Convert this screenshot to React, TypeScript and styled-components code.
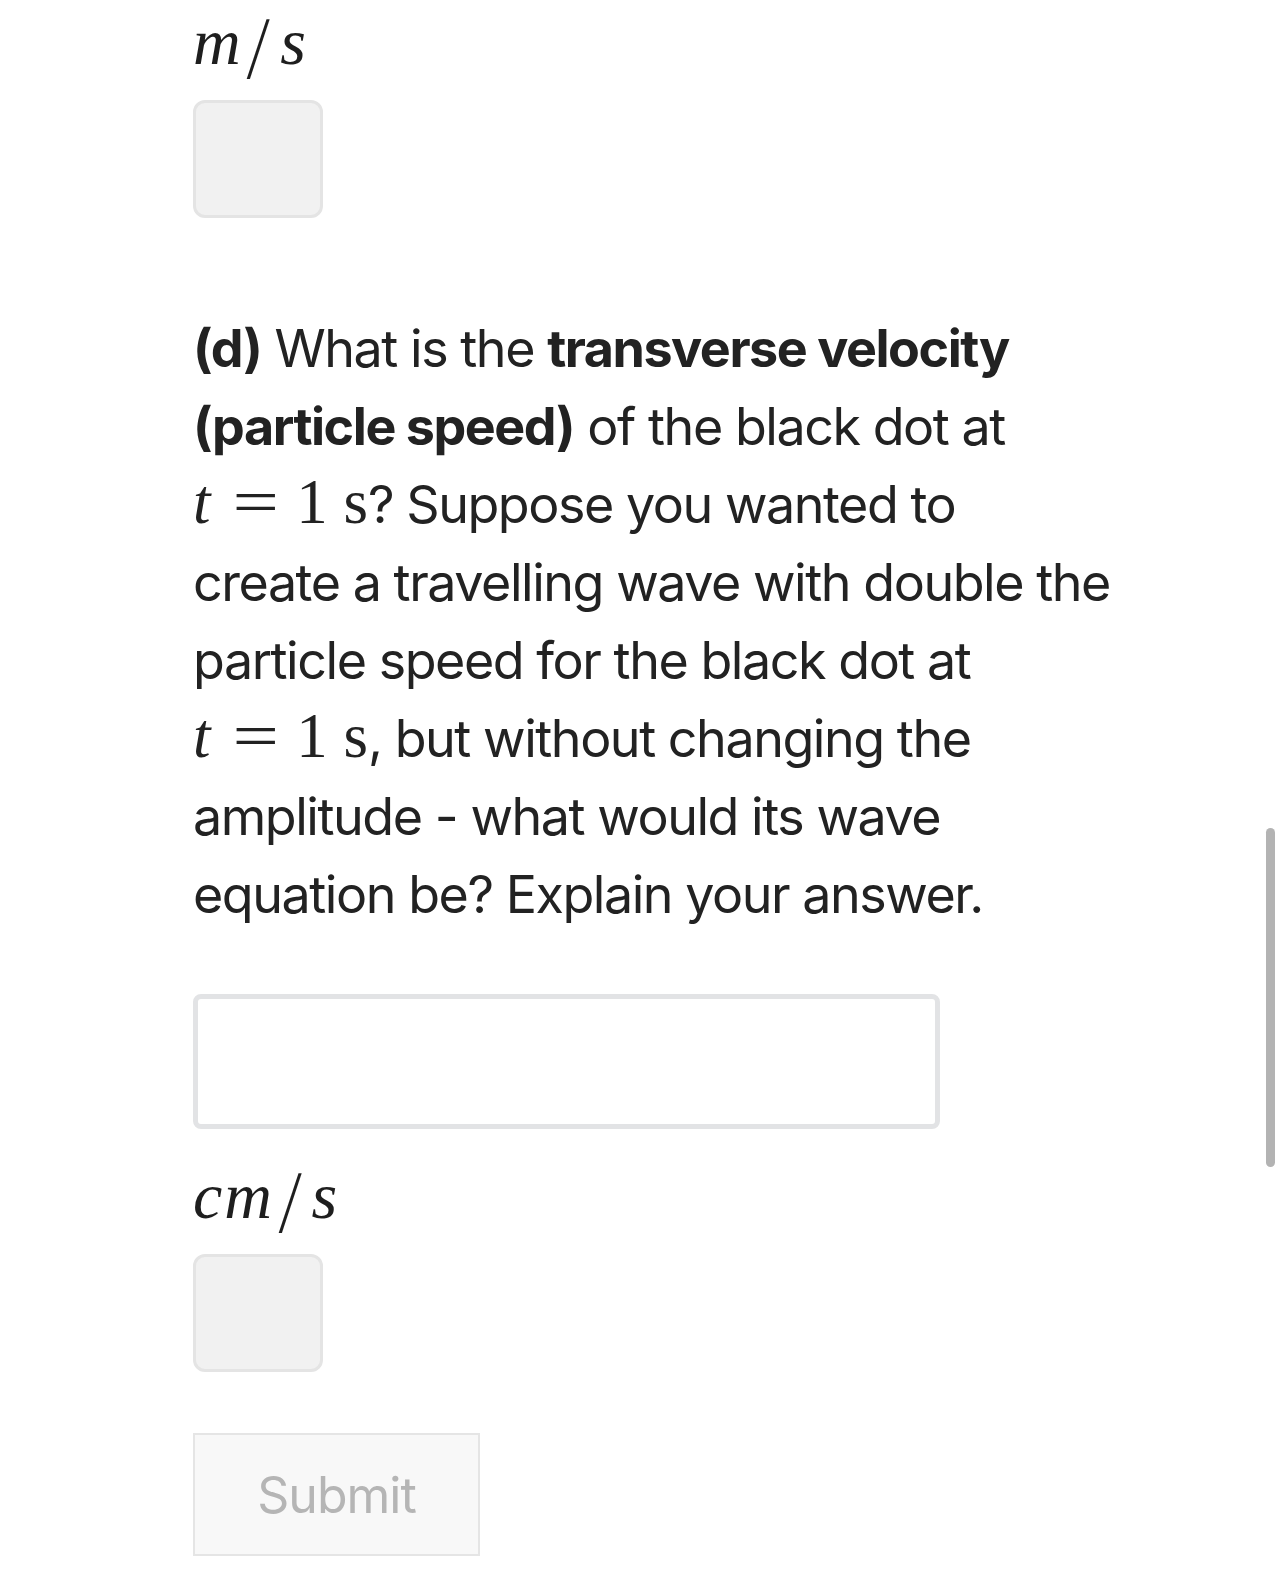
import React from 'react';
import styled, { createGlobalStyle } from 'styled-components';

const GlobalStyle = createGlobalStyle`
  html, body {
    margin: 0;
    padding: 0;
    background: #ffffff;
    overflow: hidden;
  }
  body {
    font-family: Inter, "Liberation Sans", sans-serif;
    color: #222222;
    -webkit-font-smoothing: antialiased;
  }
`;

const Page = styled.main`
  position: relative;
  min-height: 1591px;
  padding: 2px 0 0 193px;
  box-sizing: border-box;
`;

const Unit = styled.div<{ $gap?: number }>`
  margin-top: ${(p) => p.$gap ?? 0}px;
  height: 80px;
  font-family: "Liberation Serif", serif;
  font-size: 66px;
  line-height: 80px;
  letter-spacing: 0.03em;
  color: #1e1e1e;
`;

const Var = styled.i`
  font-style: italic;
`;

const Slash = styled.span`
  display: inline-block;
  margin: 0 0.16em 0 0.1em;
  transform: translateY(0.1em) scaleY(1.35) skewX(-6deg);
`;

const UnitBox = styled.div`
  margin-top: 18px;
  width: 130px;
  height: 118px;
  box-sizing: border-box;
  border: 3px solid #e4e4e4;
  border-radius: 12px;
  background: #f1f1f1;
`;

const Question = styled.p`
  margin: 92px 0 0;
  width: 918px;
  font-size: 52px;
  line-height: 78px;
  font-weight: 400;
  letter-spacing: -0.028em;
`;

const Strong = styled.strong`
  font-weight: 700;
`;

const Math = styled.span`
  font-family: "Liberation Serif", serif;
  font-size: 1.21em;
  line-height: 1;
  letter-spacing: 0;
  white-space: nowrap;
`;

const Rel = styled.span`
  display: inline-block;
  margin: 0 0.36em 0 0.44em;
  transform: scaleX(1.31);
`;

const AnswerInput = styled.input`
  display: block;
  margin: 60px 0 0;
  width: 747px;
  height: 135px;
  box-sizing: border-box;
  border: 5px solid #e2e3e5;
  border-radius: 8px;
  background: #ffffff;
  outline: none;
  padding: 0 16px;
  font: inherit;
`;

const SubmitButton = styled.button`
  display: block;
  margin-top: 61px;
  width: 287px;
  height: 123px;
  padding: 0;
  box-sizing: border-box;
  border: 2px solid #e5e5e5;
  border-radius: 0;
  background: #f8f8f8;
  color: #b5b5b5;
  font-family: Inter, "Liberation Sans", sans-serif;
  font-size: 50px;
  font-weight: 400;
  letter-spacing: -0.02em;
`;

const ScrollThumb = styled.div`
  position: absolute;
  top: 828px;
  right: 9px;
  width: 9px;
  height: 339px;
  border-radius: 5px;
  background: #b3b3b3;
`;

const TimeEquals = () => (
  <Math>
    <Var>t</Var>
    <Rel>=</Rel>1 s
  </Math>
);

const App = () => {
  return (
    <>
      <GlobalStyle />
      <Page>
        <Unit>
          <Var>m</Var>
          <Slash>/</Slash>
          <Var>s</Var>
        </Unit>
        <UnitBox />

        <Question>
          <Strong>(d)</Strong> What is the <Strong>transverse velocity (particle speed)</Strong> of
          the black dot at <TimeEquals />? Suppose you wanted to create a travelling wave with
          double the particle speed for the black dot at <TimeEquals />, but without changing the
          amplitude - what would its wave equation be? Explain your answer.
        </Question>

        <AnswerInput type="text" aria-label="answer" />

        <Unit $gap={27}>
          <Var>cm</Var>
          <Slash>/</Slash>
          <Var>s</Var>
        </Unit>
        <UnitBox />

        <SubmitButton type="button">Submit</SubmitButton>

        <ScrollThumb />
      </Page>
    </>
  );
};

export default App;
